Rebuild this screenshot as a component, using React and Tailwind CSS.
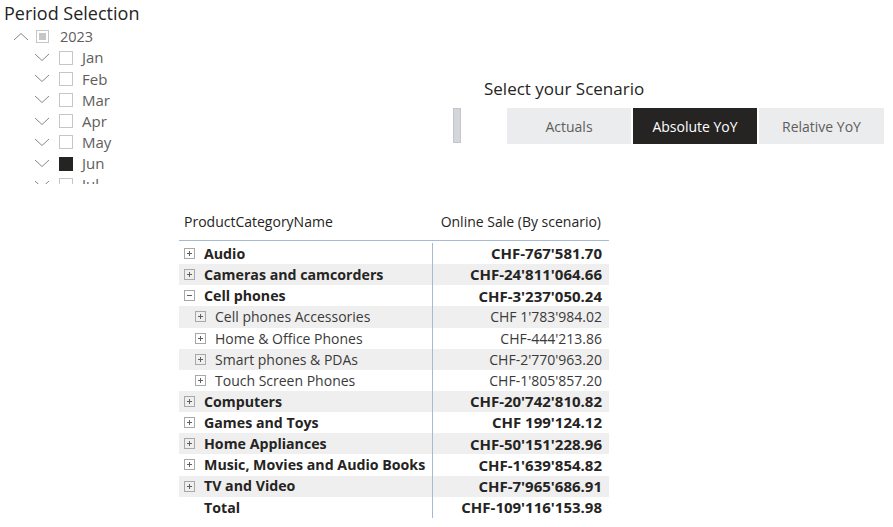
import React from "react";

const F = { fontFamily: '"Open Sans", "Liberation Sans", sans-serif' };

function ChevronDown() {
  return (
    <svg width="16" height="9" viewBox="0 0 16 9" className="shrink-0">
      <path d="M1 1 L8 7.5 L15 1" fill="none" stroke="#8a8886" strokeWidth="1" />
    </svg>
  );
}
function ChevronUp() {
  return (
    <svg width="16" height="9" viewBox="0 0 16 9" className="shrink-0">
      <path d="M1 8 L8 1.5 L15 8" fill="none" stroke="#8a8886" strokeWidth="1" />
    </svg>
  );
}

function PlusBox({ minus }) {
  return (
    <svg width="11" height="11" viewBox="0 0 11 11" className="shrink-0">
      <rect x="0.5" y="0.5" width="10" height="10" fill="none" stroke="#a8a8a8" />
      <path d="M3 5.5 H8" stroke="#606060" />
      {!minus && <path d="M5.5 3 V8" stroke="#606060" />}
    </svg>
  );
}

const months = ["Jan", "Feb", "Mar", "Apr", "May", "Jun", "Jul"];

const rows = [
  { l: "Audio", v: "CHF-767'581.70", b: true },
  { l: "Cameras and camcorders", v: "CHF-24'811'064.66", b: true },
  { l: "Cell phones", v: "CHF-3'237'050.24", b: true, minus: true },
  { l: "Cell phones Accessories", v: "CHF 1'783'984.02", c: true },
  { l: "Home & Office Phones", v: "CHF-444'213.86", c: true },
  { l: "Smart phones & PDAs", v: "CHF-2'770'963.20", c: true },
  { l: "Touch Screen Phones", v: "CHF-1'805'857.20", c: true },
  { l: "Computers", v: "CHF-20'742'810.82", b: true },
  { l: "Games and Toys", v: "CHF 199'124.12", b: true },
  { l: "Home Appliances", v: "CHF-50'151'228.96", b: true },
  { l: "Music, Movies and Audio Books", v: "CHF-1'639'854.82", b: true },
  { l: "TV and Video", v: "CHF-7'965'686.91", b: true },
  { l: "Total", v: "CHF-109'116'153.98", b: true, total: true },
];

export default function App() {
  return (
    <div className="w-[893px] h-[527px] bg-white overflow-hidden text-[#252423]" style={F}>
      <div className="flex h-[205px]">
        {/* Period slicer */}
        <div className="w-[453px] shrink-0">
          <div className="pl-[4px] pt-[1px] text-[18px] leading-[24px] text-[#252423]">Period Selection</div>
          <div className="h-[159px] overflow-hidden pt-[1px]">
            <div className="flex items-center h-[21px] pl-[13px]">
              <ChevronUp />
              <div className="ml-[7px] w-[13px] h-[13px] border border-[#c8c6c4] flex items-center justify-center">
                <div className="w-[7px] h-[7px] bg-[#c8c6c4]" />
              </div>
              <span className="ml-[11px] text-[14.5px] text-[#605e5c]">2023</span>
            </div>
            {months.map((m) => (
              <div key={m} className="flex items-center h-[21.2px] pl-[34px]">
                <ChevronDown />
                <div
                  className={
                    "ml-[9px] w-[14px] h-[14px] border " +
                    (m === "Jun" ? "bg-[#252423] border-[#252423]" : "border-[#c8c6c4]")
                  }
                />
                <span className="ml-[9px] text-[15px] text-[#605e5c]">{m}</span>
              </div>
            ))}
          </div>
        </div>
        {/* Scenario */}
        <div className="flex-1">
          <div className="pl-[31px] pt-[77px] text-[17px] leading-[24px] text-[#252423]">Select your Scenario</div>
          <div className="flex mt-[7px]">
            <div className="w-[8px] h-[35px] bg-[#d3d7db] border border-[#c2c6ca]" />
            <div className="flex ml-[46px] gap-[2px] h-[36px]">
              <div className="w-[124px] bg-[#ebeced] flex items-center justify-center text-[14px] text-[#605e5c]">Actuals</div>
              <div className="w-[124px] bg-[#252423] flex items-center justify-center text-[14px] text-white">Absolute YoY</div>
              <div className="w-[125px] bg-[#ebeced] flex items-center justify-center text-[14px] text-[#605e5c]">Relative YoY</div>
            </div>
          </div>
        </div>
      </div>

      {/* Table */}
      <div className="ml-[179px] w-[430px]">
        <div className="flex h-[36px] items-end pb-[8px] border-b border-[#a5bbd3] text-[14px] text-[#252423]">
          <div className="w-[254px] pl-[5px]">ProductCategoryName</div>
          <div className="flex-1 text-right pr-[8px]">Online Sale (By scenario)</div>
        </div>
        <div className="pt-[2px]">
          {rows.map((r, i) => (
            <div
              key={r.l}
              className={"flex h-[21.15px] items-center text-[14px] " + (i % 2 === 1 ? "bg-[#efefef]" : "")}
            >
              <div className={"w-[254px] h-full flex items-center border-r border-[#a5bbd3] " + (r.c ? "pl-[16px]" : "pl-[5px]")}>
                {r.total ? <span className="w-[11px]" /> : <PlusBox minus={r.minus} />}
                <span className={(r.c ? "ml-[9px] text-[#3b3a39]" : "ml-[9px] font-bold text-[14.2px] text-[#252423]") + " whitespace-nowrap"}>
                  {r.l}
                </span>
              </div>
              <div className={"flex-1 text-right pr-[7px] whitespace-nowrap " + (r.c ? "text-[#3b3a39]" : "font-bold text-[15px] text-[#252423]")}>
                {r.v}
              </div>
            </div>
          ))}
        </div>
      </div>
    </div>
  );
}
